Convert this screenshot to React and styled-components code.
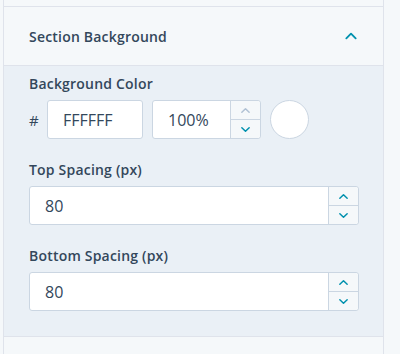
import styled, { createGlobalStyle } from "styled-components";

const GlobalStyle = createGlobalStyle`
  html, body {
    margin: 0;
    padding: 0;
    background: #f5f8fa;
    font-family: "Open Sans", "Lato", sans-serif;
    color: #33475b;
  }
`;

const ChevronUp = ({ color = "#0091ae", size = 12 }) => (
  <svg width={size} height={size} viewBox="0 0 12 12" fill="none">
    <path d="M2 8 L6 4 L10 8" stroke={color} strokeWidth="1.6" strokeLinecap="round" strokeLinejoin="round" />
  </svg>
);

const ChevronDown = ({ color = "#0091ae", size = 12 }) => (
  <svg width={size} height={size} viewBox="0 0 12 12" fill="none">
    <path d="M2 4 L6 8 L10 4" stroke={color} strokeWidth="1.6" strokeLinecap="round" strokeLinejoin="round" />
  </svg>
);

function Stepper({ upDisabled }) {
  return (
    <StepperBox>
      <StepButton>
        <ChevronUp color={upDisabled ? "#b0c1d4" : "#0091ae"} size={11} />
      </StepButton>
      <StepButton>
        <ChevronDown size={11} />
      </StepButton>
    </StepperBox>
  );
}

function App() {
  return (
    <>
      <GlobalStyle />
      <Page>
        <Panel>
          <PrevSection />
          <Header>
            <HeaderTitle>Section Background</HeaderTitle>
            <ChevronUp size={14} />
          </Header>
          <Body>
            <Field>
              <Label>Background Color</Label>
              <ColorRow>
                <Hash>#</Hash>
                <TextBox width="96px">
                  <Value>FFFFFF</Value>
                </TextBox>
                <TextBox width="109px">
                  <Value>100%</Value>
                  <Stepper upDisabled />
                </TextBox>
                <Swatch />
              </ColorRow>
            </Field>
            <Field>
              <Label>Top Spacing (px)</Label>
              <TextBox>
                <Value>80</Value>
                <Stepper />
              </TextBox>
            </Field>
            <Field>
              <Label>Bottom Spacing (px)</Label>
              <TextBox>
                <Value>80</Value>
                <Stepper />
              </TextBox>
            </Field>
          </Body>
          <NextSection />
        </Panel>
      </Page>
    </>
  );
}

const Page = styled.div`
  width: 400px;
  height: 354px;
  overflow: hidden;
  background: #f5f8fa;
`;

const Panel = styled.div`
  margin-left: 3px;
  width: 381px;
  height: 100%;
  box-sizing: border-box;
  border-left: 1px solid #dfe3eb;
  border-right: 1px solid #dfe3eb;
  display: flex;
  flex-direction: column;
`;

const PrevSection = styled.div`
  height: 6px;
  border-bottom: 1px solid #dfe3eb;
  background: #f5f8fa;
`;

const Header = styled.div`
  height: 58px;
  padding: 0 25px 0 25px;
  display: flex;
  align-items: center;
  justify-content: space-between;
  border-bottom: 1px solid #dfe3eb;
  background: #f5f8fa;
`;

const HeaderTitle = styled.div`
  font-size: 14px;
  font-weight: 600;
  letter-spacing: 0.2px;
`;

const Body = styled.div`
  background: #eaf0f6;
  padding: 9px 25px 25px 25px;
  display: flex;
  flex-direction: column;
  gap: 22px;
  border-bottom: 1px solid #dfe3eb;
`;

const Field = styled.div`
  display: flex;
  flex-direction: column;
`;

const Label = styled.div`
  font-size: 14px;
  font-weight: 600;
  line-height: 18px;
  margin-bottom: 7px;
  letter-spacing: 0.2px;
`;

const ColorRow = styled.div`
  display: flex;
  align-items: center;
  gap: 9px;
`;

const Hash = styled.span`
  font-size: 15px;
  width: 9px;
`;

const TextBox = styled.div`
  width: ${(p) => p.width || "330px"};
  height: 39px;
  box-sizing: border-box;
  background: #fff;
  border: 1px solid #cbd6e2;
  border-radius: 3px;
  display: flex;
  align-items: stretch;
`;

const Value = styled.div`
  flex: 1;
  display: flex;
  align-items: center;
  padding-left: 15px;
  font-size: 16px;
`;

const StepperBox = styled.div`
  width: 29px;
  border-left: 1px solid #cbd6e2;
  background: #f5f8fa;
  display: flex;
  flex-direction: column;
  border-radius: 0 3px 3px 0;
`;

const StepButton = styled.div`
  flex: 1;
  display: flex;
  align-items: center;
  justify-content: center;
  & + & {
    border-top: 1px solid #cbd6e2;
  }
`;

const Swatch = styled.div`
  width: 39px;
  height: 39px;
  box-sizing: border-box;
  border-radius: 50%;
  background: #fff;
  border: 1px solid #cbd6e2;
`;

const NextSection = styled.div`
  flex: 1;
  background: #f5f8fa;
`;

export default App;
